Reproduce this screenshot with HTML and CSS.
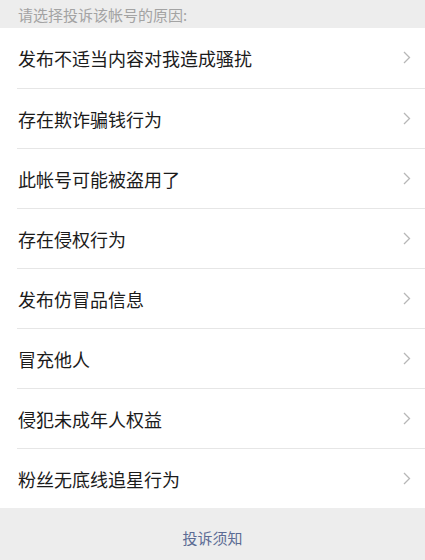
FILE: index.html
```html
<!DOCTYPE html>
<html lang="zh-CN">
<head>
<meta charset="utf-8">
<link rel="stylesheet" href="styles.css">
</head>
<body>
<div class="page">
  <div class="tip">请选择投诉该帐号的原因:</div>
  <ul class="list">
    <li class="item"><span class="label">发布不适当内容对我造成骚扰</span><svg class="arrow" viewBox="0 0 8 13"><path d="M1 1 L6.5 6.5 L1 12" fill="none" stroke="#b7b7b7" stroke-width="1.3"/></svg></li>
    <li class="item"><span class="label">存在欺诈骗钱行为</span><svg class="arrow" viewBox="0 0 8 13"><path d="M1 1 L6.5 6.5 L1 12" fill="none" stroke="#b7b7b7" stroke-width="1.3"/></svg></li>
    <li class="item"><span class="label">此帐号可能被盗用了</span><svg class="arrow" viewBox="0 0 8 13"><path d="M1 1 L6.5 6.5 L1 12" fill="none" stroke="#b7b7b7" stroke-width="1.3"/></svg></li>
    <li class="item"><span class="label">存在侵权行为</span><svg class="arrow" viewBox="0 0 8 13"><path d="M1 1 L6.5 6.5 L1 12" fill="none" stroke="#b7b7b7" stroke-width="1.3"/></svg></li>
    <li class="item"><span class="label">发布仿冒品信息</span><svg class="arrow" viewBox="0 0 8 13"><path d="M1 1 L6.5 6.5 L1 12" fill="none" stroke="#b7b7b7" stroke-width="1.3"/></svg></li>
    <li class="item"><span class="label">冒充他人</span><svg class="arrow" viewBox="0 0 8 13"><path d="M1 1 L6.5 6.5 L1 12" fill="none" stroke="#b7b7b7" stroke-width="1.3"/></svg></li>
    <li class="item"><span class="label">侵犯未成年人权益</span><svg class="arrow" viewBox="0 0 8 13"><path d="M1 1 L6.5 6.5 L1 12" fill="none" stroke="#b7b7b7" stroke-width="1.3"/></svg></li>
    <li class="item"><span class="label">粉丝无底线追星行为</span><svg class="arrow" viewBox="0 0 8 13"><path d="M1 1 L6.5 6.5 L1 12" fill="none" stroke="#b7b7b7" stroke-width="1.3"/></svg></li>
  </ul>
  <div class="footer"><a class="notice">投诉须知</a></div>
</div>
</body>
</html>
```

FILE: styles.css
```css
html, body {
  margin: 0;
  padding: 0;
  background: #ededed;
  font-family: "Noto Sans CJK SC", "Noto Sans", sans-serif;
}
.page {
  width: 425px;
  height: 560px;
  display: flex;
  flex-direction: column;
  overflow: hidden;
}
.tip {
  height: 28px;
  box-sizing: border-box;
  padding: 2px 18px 0;
  font-size: 15px;
  line-height: 26px;
  color: #a3a3a3;
  background: #ededed;
}
.list {
  list-style: none;
  margin: 0;
  padding: 0;
  background: #ffffff;
}
.item {
  box-sizing: border-box;
  height: 60px;
  margin-left: 17px;
  padding: 0 14px 0 1px;
  display: flex;
  align-items: center;
  justify-content: space-between;
  border-top: 1px solid #e6e6e6;
}
.item:first-child {
  border-top: none;
  padding-bottom: 1px;
}
.label {
  font-size: 18px;
  color: #1b1b1b;
  line-height: 24px;
}
.arrow {
  width: 8px;
  height: 13px;
  display: block;
}
.footer {
  flex: 1;
  display: flex;
  justify-content: center;
  align-items: center;
  background: #ededed;
  padding-top: 7px;
}
.notice {
  font-size: 15px;
  color: #5b6b94;
}
```
